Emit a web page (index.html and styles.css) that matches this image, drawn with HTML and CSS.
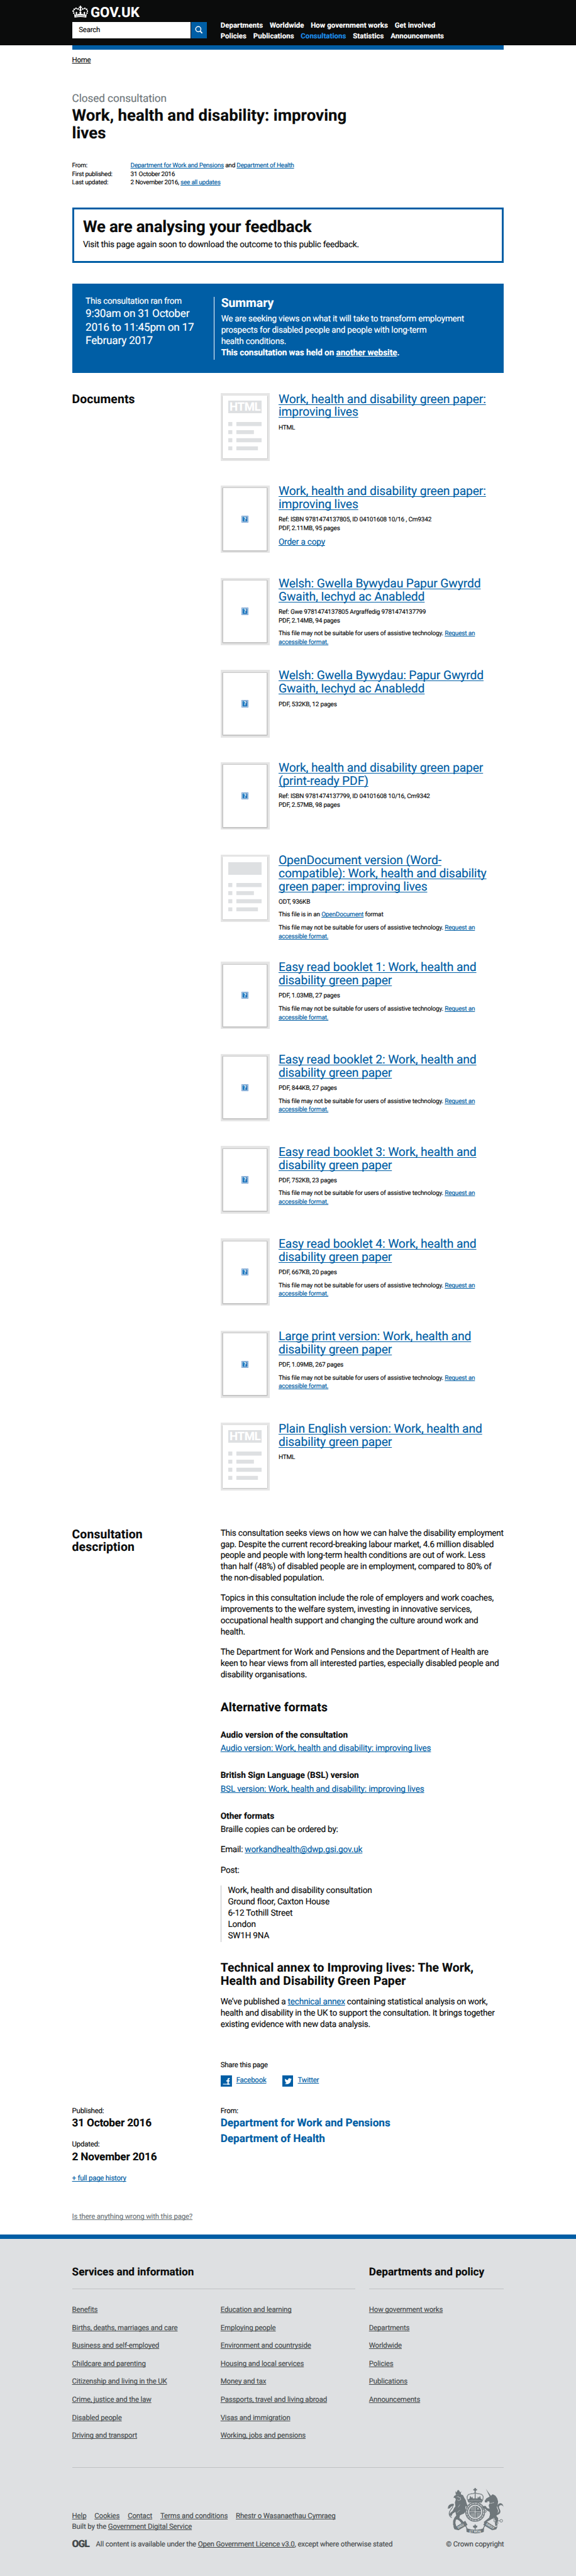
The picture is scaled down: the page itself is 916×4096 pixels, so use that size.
FILE: index.html
```html
<!DOCTYPE html>
<html lang="en">
<head>
<meta charset="utf-8">
<title>Work, health and disability: improving lives - GOV.UK</title>
<link rel="stylesheet" href="styles.css">
</head>
<body>
<svg class="defs" aria-hidden="true">
  <symbol id="page-rows" viewBox="0 0 75 63">
    <path fill="#dee0e2" d="M0 0h9v9H0zM18 0h57v9H18zM0 18h9v9H0zM18 18h39v9H18zM0 36h9v9H0zM18 36h57v9H18zM0 54h9v9H0zM18 54h48v9H18z"/>
  </symbol>
</svg>

<header class="header">
  <div class="wrap">
    <a class="logo" href="#">
      <svg class="crown" viewBox="0 0 36 27" fill="#fff">
        <path d="M16.800 0h2.400v2.600h2.400v2.300h-2.400v2.200l1.600 3.400-2.800 2-2.800-2 1.600-3.400V4.900h-2.400V2.600h2.400z"/>
        <circle cx="12.800" cy="7.400" r="1.900"/><circle cx="8.300" cy="6" r="1.900"/><circle cx="4.300" cy="8.200" r="1.900"/><circle cx="2" cy="12.200" r="1.900"/><circle cx="3.200" cy="16.400" r="1.700"/>
        <circle cx="23.200" cy="7.400" r="1.900"/><circle cx="27.700" cy="6" r="1.900"/><circle cx="31.700" cy="8.200" r="1.900"/><circle cx="34" cy="12.200" r="1.900"/><circle cx="32.800" cy="16.400" r="1.700"/>
        <path d="M5 26.500 4 18l4 2.500-.6-5.500 1.800-1.800 1.700 1.900-.5 4.400 2.500-.8 1.600-1.300 2.200 1.300-1-4.200L18 12.500l2.300 2-1 4.200 2.200-1.300 1.600 1.300 2.500.8-.5-4.400 1.700-1.900 1.800 1.800-.6 5.500 4-2.500-1 8.500q-13-2.600-26 0z"/>
        <path d="M7.500 23.300q10.500-2.200 21 0" fill="none" stroke="#0b0c0c" stroke-width="1"/>
      </svg>
      <span class="logo-text">GOV.UK</span>
    </a>
    <div class="header-row">
      <form class="search">
        <span class="search-field">Search</span>
        <span class="search-button">
          <svg viewBox="0 0 18 18"><circle cx="7.500" cy="7.500" r="5.800" fill="none" stroke="#fff" stroke-width="2"/><path d="m11.800 12 4.400 4.600" stroke="#fff" stroke-width="2.600"/></svg>
        </span>
      </form>
      <nav class="nav">
        <div class="nav-line"><a href="#">Departments</a><a href="#">Worldwide</a><a href="#">How government works</a><a href="#">Get involved</a></div>
        <div class="nav-line"><a href="#">Policies</a><a href="#">Publications</a><a class="active" href="#">Consultations</a><a href="#">Statistics</a><a href="#">Announcements</a></div>
      </nav>
    </div>
  </div>
</header>

<main class="wrap">
  <div class="bar"></div>
  <p class="crumb"><a href="#">Home</a></p>

  <p class="context">Closed consultation</p>
  <h1 class="title">Work, health and disability: improving<br>lives</h1>

  <dl class="meta">
    <dt>From:</dt><dd><a href="#">Department for Work and Pensions</a> and <a href="#">Department of Health</a></dd>
    <dt>First published:</dt><dd>31 October 2016</dd>
    <dt>Last updated:</dt><dd>2 November 2016, <a href="#">see all updates</a></dd>
  </dl>

  <section class="notice">
    <h2>We are analysing your feedback</h2>
    <p>Visit this page again soon to download the outcome to this public feedback.</p>
  </section>

  <section class="summary">
    <div class="dates">
      <p>This consultation ran from</p>
      <p class="dates-range">9:30am on 31 October<br>2016 to 11:45pm on 17<br>February 2017</p>
    </div>
    <div class="summary-body">
      <h2>Summary</h2>
      <p>We are seeking views on what it will take to transform employment<br>prospects for disabled people and people with long-term<br>health conditions.</p>
      <p><strong>This consultation was held on <a href="#">another website</a>.</strong></p>
    </div>
  </section>

  <section class="row documents">
    <h2 class="side">Documents</h2>
    <div class="doc-list">
      <article class="doc">
        <div class="thumb"><div class="page sheet"><span class="label">HTML</span><svg class="rows"><use href="#page-rows"/></svg></div></div>
        <div class="details">
          <h3><a href="#">Work, health and disability green paper:<br>improving lives</a></h3>
          <p>HTML</p>
        </div>
      </article>
      <article class="doc">
        <div class="thumb"><div class="page framed"><span class="missing">?</span></div></div>
        <div class="details">
          <h3><a href="#">Work, health and disability green paper:<br>improving lives</a></h3>
          <p>Ref: ISBN 9781474137805, ID 04101608 10/16 , Cm9342<br>PDF, 2.11MB, 95 pages</p>
          <p class="order"><a href="#">Order a copy</a></p>
        </div>
      </article>
      <article class="doc">
        <div class="thumb"><div class="page framed"><span class="missing">?</span></div></div>
        <div class="details">
          <h3><a href="#">Welsh: Gwella Bywydau Papur Gwyrdd<br>Gwaith, Iechyd ac Anabledd</a></h3>
          <p>Ref: Gwe 9781474137805 Argraffedig 9781474137799<br>PDF, 2.14MB, 94 pages</p>
          <p>This file may not be suitable for users of assistive technology. <a href="#">Request an<br>accessible format.</a></p>
        </div>
      </article>
      <article class="doc">
        <div class="thumb"><div class="page framed"><span class="missing">?</span></div></div>
        <div class="details">
          <h3><a href="#">Welsh: Gwella Bywydau: Papur Gwyrdd<br>Gwaith, Iechyd ac Anabledd</a></h3>
          <p>PDF, 532KB, 12 pages</p>
        </div>
      </article>
      <article class="doc">
        <div class="thumb"><div class="page framed"><span class="missing">?</span></div></div>
        <div class="details">
          <h3><a href="#">Work, health and disability green paper<br>(print-ready PDF)</a></h3>
          <p>Ref: ISBN 9781474137799, ID 04101608 10/16, Cm9342<br>PDF, 2.57MB, 98 pages</p>
        </div>
      </article>
      <article class="doc">
        <div class="thumb"><div class="page sheet"><span class="label"></span><svg class="rows"><use href="#page-rows"/></svg></div></div>
        <div class="details">
          <h3><a href="#">OpenDocument version (Word-<br>compatible): Work, health and disability<br>green paper: improving lives</a></h3>
          <p>ODT, 936KB</p>
          <p>This file is in an <a href="#">OpenDocument</a> format</p>
          <p>This file may not be suitable for users of assistive technology. <a href="#">Request an<br>accessible format.</a></p>
        </div>
      </article>
      <article class="doc">
        <div class="thumb"><div class="page framed"><span class="missing">?</span></div></div>
        <div class="details">
          <h3><a href="#">Easy read booklet 1: Work, health and<br>disability green paper</a></h3>
          <p>PDF, 1.03MB, 27 pages</p>
          <p>This file may not be suitable for users of assistive technology. <a href="#">Request an<br>accessible format.</a></p>
        </div>
      </article>
      <article class="doc">
        <div class="thumb"><div class="page framed"><span class="missing">?</span></div></div>
        <div class="details">
          <h3><a href="#">Easy read booklet 2: Work, health and<br>disability green paper</a></h3>
          <p>PDF, 844KB, 27 pages</p>
          <p>This file may not be suitable for users of assistive technology. <a href="#">Request an<br>accessible format.</a></p>
        </div>
      </article>
      <article class="doc">
        <div class="thumb"><div class="page framed"><span class="missing">?</span></div></div>
        <div class="details">
          <h3><a href="#">Easy read booklet 3: Work, health and<br>disability green paper</a></h3>
          <p>PDF, 752KB, 23 pages</p>
          <p>This file may not be suitable for users of assistive technology. <a href="#">Request an<br>accessible format.</a></p>
        </div>
      </article>
      <article class="doc">
        <div class="thumb"><div class="page framed"><span class="missing">?</span></div></div>
        <div class="details">
          <h3><a href="#">Easy read booklet 4: Work, health and<br>disability green paper</a></h3>
          <p>PDF, 667KB, 20 pages</p>
          <p>This file may not be suitable for users of assistive technology. <a href="#">Request an<br>accessible format.</a></p>
        </div>
      </article>
      <article class="doc">
        <div class="thumb"><div class="page framed"><span class="missing">?</span></div></div>
        <div class="details">
          <h3><a href="#">Large print version: Work, health and<br>disability green paper</a></h3>
          <p>PDF, 1.09MB, 267 pages</p>
          <p>This file may not be suitable for users of assistive technology. <a href="#">Request an<br>accessible format.</a></p>
        </div>
      </article>
      <article class="doc">
        <div class="thumb"><div class="page sheet"><span class="label">HTML</span><svg class="rows"><use href="#page-rows"/></svg></div></div>
        <div class="details">
          <h3><a href="#">Plain English version: Work, health and<br>disability green paper</a></h3>
          <p>HTML</p>
        </div>
      </article>
    </div>
  </section>

  <section class="row description">
    <h2 class="side">Consultation<br>description</h2>
    <div class="prose">
      <p>This consultation seeks views on how we can halve the disability employment<br>gap. Despite the current record-breaking labour market, 4.6 million disabled<br>people and people with long-term health conditions are out of work. Less<br>than half (48%) of disabled people are in employment, compared to 80% of<br>the non-disabled population.</p>
      <p>Topics in this consultation include the role of employers and work coaches,<br>improvements to the welfare system, investing in innovative services,<br>occupational health support and changing the culture around work and<br>health.</p>
      <p>The Department for Work and Pensions and the Department of Health are<br>keen to hear views from all interested parties, especially disabled people and<br>disability organisations.</p>
      <h2>Alternative formats</h2>
      <h3>Audio version of the consultation</h3>
      <p><a class="wide" href="#">Audio version: Work, health and disability: improving lives</a></p>
      <h3>British Sign Language (BSL) version</h3>
      <p><a class="wide" href="#">BSL version: Work, health and disability: improving lives</a></p>
      <h3>Other formats</h3>
      <p>Braille copies can be ordered by:</p>
      <p>Email: <a class="wide" href="#">workandhealth@dwp.gsi.gov.uk</a></p>
      <p>Post:</p>
      <address>Work, health and disability consultation<br>Ground floor, Caxton House<br>6-12 Tothill Street<br>London<br>SW1H 9NA</address>
      <h2 class="annex">Technical annex to Improving lives: The Work,<br>Health and Disability Green Paper</h2>
      <p>We’ve published a <a href="#">technical annex</a> containing statistical analysis on work,<br>health and disability in the UK to support the consultation. It brings together<br>existing evidence with new data analysis.</p>
    </div>
  </section>

  <section class="share">
    <p>Share this page</p>
    <div class="share-links">
      <a href="#"><svg viewBox="0 0 25 25"><rect width="25" height="25" fill="#005ea5"/><path d="M5 18h16v3H5z" fill="#8fb9dc"/><path d="M15 21v-7.500h-2.500v-2.800H15V9q0-3.200 3.300-3.200H20v2.600h-1.300q-.9 0-.9 1v1.300H20l-.4 2.800h-1.800V21z" fill="#fff"/></svg><span>Facebook</span></a>
      <a href="#"><svg viewBox="0 0 25 25"><rect width="25" height="25" fill="#005ea5"/><path d="M21 8.100q-.9.400-1.900.5 1-.6 1.400-1.800-.9.600-2 .8a3.300 3.300 0 0 0-5.700 3Q8.700 10.400 6 7.200q-1.300 2.600 1 4.400-.8 0-1.500-.4 0 2.400 2.600 3.300-.7.200-1.400 0 .6 2 3 2.300-2 1.600-4.800 1.400Q7 19.600 10 19.600q8.700-.3 9.400-9.700Q20.400 9.200 21 8.100z" fill="#fff"/></svg><span>Twitter</span></a>
    </div>
  </section>

  <section class="row history">
    <div class="history-dates">
      <p>Published:</p>
      <p class="strong">31 October 2016</p>
      <p class="updated">Updated:</p>
      <p class="strong">2 November 2016</p>
      <p class="full"><a href="#">+ full page history</a></p>
    </div>
    <div class="history-from">
      <p>From:</p>
      <p class="strong"><a href="#">Department for Work and Pensions</a></p>
      <p class="strong"><a href="#">Department of Health</a></p>
    </div>
  </section>

  <p class="report"><a href="#">Is there anything wrong with this page?</a></p>
</main>

<footer class="footer">
  <div class="wrap">
    <div class="categories">
      <section class="services">
        <h2>Services and information</h2>
        <div class="columns">
          <ul>
            <li><a href="#">Benefits</a></li>
            <li><a href="#">Births, deaths, marriages and care</a></li>
            <li><a href="#">Business and self-employed</a></li>
            <li><a href="#">Childcare and parenting</a></li>
            <li><a href="#">Citizenship and living in the UK</a></li>
            <li><a href="#">Crime, justice and the law</a></li>
            <li><a href="#">Disabled people</a></li>
            <li><a href="#">Driving and transport</a></li>
          </ul>
          <ul>
            <li><a href="#">Education and learning</a></li>
            <li><a href="#">Employing people</a></li>
            <li><a href="#">Environment and countryside</a></li>
            <li><a href="#">Housing and local services</a></li>
            <li><a href="#">Money and tax</a></li>
            <li><a href="#">Passports, travel and living abroad</a></li>
            <li><a href="#">Visas and immigration</a></li>
            <li><a href="#">Working, jobs and pensions</a></li>
          </ul>
        </div>
      </section>
      <section class="departments">
        <h2>Departments and policy</h2>
        <ul>
          <li><a href="#">How government works</a></li>
          <li><a href="#">Departments</a></li>
          <li><a href="#">Worldwide</a></li>
          <li><a href="#">Policies</a></li>
          <li><a href="#">Publications</a></li>
          <li><a href="#">Announcements</a></li>
        </ul>
      </section>
    </div>
    <div class="base">
      <div class="base-links">
        <p class="support"><a href="#">Help</a><a href="#">Cookies</a><a href="#">Contact</a><a href="#">Terms and conditions</a><a href="#">Rhestr o Wasanaethau Cymraeg</a></p>
        <p>Built by the <a href="#">Government Digital Service</a></p>
        <p class="licence"><span class="ogl">OGL</span><span>All content is available under the <a href="#">Open Government Licence v3.0</a>, except where otherwise stated</span></p>
      </div>
      <div class="copyright">
        <svg class="crest" viewBox="0 0 125 102" fill="#6f777b">
          <!-- crown -->
          <path d="M59.500 0h3v2.500h2.500v3h-2.500V9h-3V5.500H57v-3h2.500z"/>
          <path d="M46 30c-4-7-4-14 2-16 5-2 9 0 13-4 4 4 8 2 13 4 6 2 6 9 2 16z" fill="none" stroke="#6f777b" stroke-width="2" stroke-dasharray="2.600 .6"/>
          <path d="M60 10h2v15h-2zM50 17l3 5 2-3 1 6h-8zM72 17l-3 5-2-3-1 6h8z"/>
          <path d="M45 25q16-4 32 0l-1.500 8q-14.500-3-29 0z"/>
          <path d="M48 29q13-2.500 26 0" stroke="#dee0e2" fill="none" stroke-dasharray="2 1.500"/>
          <!-- garter and shield -->
          <circle cx="61" cy="53" r="19" fill="none" stroke="#6f777b" stroke-width="6.500"/>
          <circle cx="61" cy="53" r="19" fill="none" stroke="#dee0e2" stroke-width="3" stroke-dasharray="1 1.700 2 1.500"/>
          <circle cx="61" cy="53" r="13.500"/>
          <path d="M61 40v26M48 53h26" stroke="#dee0e2" stroke-width="1.300"/>
          <path d="M51 46h8M51 49h8M52 43h7M64 60h8M64 63h6M64 57h8M64 43l6 6M70 43l-5 6M52 56v7M55 56v9M58 56v9" stroke="#dee0e2" fill="none"/>
          <!-- lion -->
          <path d="m17 7 2 3 2-3 1-2h3l1 2 2 3 2-3-1 8H18z"/>
          <path d="M19 15l10-1 5 2 3 6 3 5 2 7 2 5-1 4-3-3-1 6 1 6-4 5-5 2-4 2-1 6 4 3 5 5 2 5-6-1-5-6-5-3-3 1-1 7 2 7 4 3-3 1-5-1-3-6 0-9 3-7 4-5-2-8-6 4-3 6-4-3 1-4 6-5 3-6 3-4-1-9 2-7-2-3-3 0 1-4z"/>
          <path d="M20 20l4-1 1 3 3-1 1 5-5 2-3-2M21 55l6-6M27 37l-4 6" stroke="#dee0e2" fill="none" stroke-width=".8"/>
          <path d="M9 66C1 62 2 54 7 48s6-8 1-9" fill="none" stroke="#6f777b" stroke-width="1.600"/>
          <path d="M0 46q0-11 13-11l1 4q-7 1-9 6z"/>
          <!-- unicorn -->
          <path d="M85 2l12 17-3 2z"/>
          <path d="M95 18l5-4 6 3 4 6 2 7-1 8-2 5 3 7-1 8-3 4 4 5 0 6-3 6 2 4-5 2-1-6 1-7-3-6-8 5-8 4-4 5-3-4 6-5 6-5 2-7-1-6-6-3-6-6-4 1 1-4 6-1 4 5 5 1-2-7 2-5-1-5-5 3-4 0-1-3 4-6z"/>
          <path d="M88 30l4 4 6 0 5-2" stroke="#dee0e2" stroke-width="1.500" fill="none" stroke-dasharray="1.500 1"/>
          <path d="M108 61q13-4 8-13t2-10q5 0 6 5-1-10-8-9-9 4-4 12t-5 12z"/>
          <g fill="none" stroke="#6f777b" stroke-width="1.300"><circle cx="81" cy="43" r="2.200"/><circle cx="84" cy="52" r="2"/><circle cx="105" cy="73" r="2.500"/><circle cx="110" cy="78" r="2"/><circle cx="102" cy="67" r="2"/><circle cx="119" cy="73" r="3"/><path d="M108 73h8"/></g>
          <!-- motto scroll -->
          <path d="M12 85l5 2 22-14 5 9-20 12-9-2z"/><path d="M111 85l-5 2-22-14-5 9 20 12 9-2z"/>
          <path d="M40 82q-3 2 1 6l1 10q19 6 38 0l1-10q4-4 1-6l-4 8q-17 6-34 0z"/>
          <path d="M61 80l2 4 3 0-1 4-3 1v4h-2v-4l-3-1-1-4 3 0z"/>
          <text x="61" y="99.500" text-anchor="middle" class="motto">ET MON</text>
          <text x="30" y="87" text-anchor="middle" class="motto" transform="rotate(-31 30 87)">DIEU</text>
          <text x="93" y="87" text-anchor="middle" class="motto" transform="rotate(32 93 87)">DROIT</text>
        </svg>
        <p>© Crown copyright</p>
      </div>
    </div>
  </div>
</footer>
</body>
</html>
```
FILE: styles.css
```css
html { font-size: 7.1546px; }
* { box-sizing: border-box; }
body {
  margin: 0;
  background: #fff;
  color: #0b0c0c;
  font: 400 1.9rem/2.5rem Roboto, "Liberation Sans", sans-serif;
  letter-spacing: -.017em;
  white-space: nowrap;
  text-rendering: geometricPrecision;
  -webkit-text-stroke: .16px;
}
h1, h2, h3, p, ul, dl, dd, address { margin: 0; padding: 0; font-style: normal; }
h1, h2, h3, strong { letter-spacing: .001em; font-weight: 700; }
ul { list-style: none; }
a { color: #005ea5; text-decoration: underline; text-decoration-skip-ink: none; text-decoration-thickness: 1px; text-underline-offset: .08em; }
svg { display: block; }
.defs { position: absolute; width: 0; height: 0; }
.wrap { width: 96rem; margin: 0 auto; }

/* header */
.header { height: 10.1rem; background: #0b0c0c; }
.logo { display: flex; height: 4.9rem; padding-top: 1.1rem; color: #fff; text-decoration: none; }
.crown { width: 3.6rem; height: 2.7rem; margin: .1rem .5rem 0 0; }
.logo-text { font-weight: 700; font-size: 3.1rem; line-height: 3.4rem; letter-spacing: .005em; }
.header-row { display: flex; }
.search { display: flex; width: 30rem; height: 3.6rem; margin-right: 3rem; gap: .1rem; }
.search-field { flex: 1; padding-left: 1.5rem; background: #fff; font-size: 1.6rem; line-height: 3.6rem; }
.search-button { display: flex; width: 3.5rem; background: #005ea5; align-items: center; justify-content: center; }
.search-button svg { width: 1.8rem; height: 1.8rem; }
.nav { margin-top: -.45rem; font-weight: 700; font-size: 1.6rem; line-height: 2.4rem; letter-spacing: .006em; }
.nav-line { display: flex; gap: 1.5rem; }
.nav a { color: #fff; text-decoration: none; }
.nav .active { color: #1d8feb; }

/* page heading */
.bar { height: 1rem; background: #005ea5; }
.crumb { margin-top: 1.15rem; font-size: 1.6rem; line-height: 2rem; }
.crumb a { color: #0b0c0c; }
.context { margin-top: 6.25rem; color: #6f777b; font-size: 2.4rem; line-height: 3rem; letter-spacing: -.004em; }
.title { padding-top: .2rem; font-size: 3.6rem; line-height: 3.95rem; letter-spacing: .002em; }
.meta { display: grid; grid-template-columns: 13rem 1fr; margin-top: 4.35rem; font-size: 1.4rem; line-height: 1.9rem; }

.notice { height: 12.4rem; margin-top: 4.45rem; padding: 1.95rem 2rem 0; border: .5rem solid #005ea5; }
.notice h2 { margin-bottom: .85rem; font-size: 3.6rem; line-height: 4rem; letter-spacing: -.005em; }

.summary { display: flex; height: 19.9rem; margin-top: 4.5rem; padding: 3rem 0 3rem 3rem; background: #005ea5; color: #fff; }
.summary a { color: #fff; }
.dates { width: 28.5rem; margin-top: -.1rem; }
.dates-range { font-size: 2.4rem; line-height: 3rem; letter-spacing: -.012em; }
.summary-body { padding-left: 1.5rem; border-left: 1px solid #fff; }
.summary-body h2 { margin: -.15rem 0 .95rem; font-size: 2.7rem; line-height: 3rem; }
.summary-body strong { letter-spacing: -.005em; }

/* two-column rows */
.row { display: grid; grid-template-columns: 33rem 63rem; }
.side { font-size: 2.7rem; line-height: 2.9rem; letter-spacing: .008em; }

/* documents */
.documents { margin-top: 4.5rem; }
.documents .side { margin-top: -.1rem; }
.doc-list { display: grid; row-gap: 5.5rem; }
.doc { display: flex; align-items: flex-start; }
.thumb { width: 10.9rem; height: 15rem; padding: .5rem; margin-right: 2rem; background: #e6e6e6; }
.page { width: 9.9rem; height: 14rem; background: #fff; box-shadow: 0 .2rem .2rem rgba(0, 0, 0, .4), 0 0 .1rem rgba(0, 0, 0, .3); }
.sheet { padding: 1.2rem; }
.label { display: block; height: 2.8rem; margin-bottom: 1.9rem; background: #dee0e2; color: #fff; font-weight: 700; font-size: 2.6rem; line-height: 2.8rem; letter-spacing: -.02em; text-align: center; }
.rows { width: 7.5rem; height: 6.3rem; }
.framed { display: flex; border: 1px solid #c9c9c9; align-items: center; justify-content: center; }
.missing { width: 1.6rem; height: 1.6rem; border: 1px solid #7fa6d4; background: #2277bd; box-shadow: inset 0 0 0 .5px #fff; color: #fff; font: 700 1.2rem/1.3rem "Liberation Serif", serif; letter-spacing: 0; text-align: center; }
.details { margin: -.1rem 0 -.9rem; }
.details h3 { margin-bottom: 1rem; font-weight: 400; font-size: 2.7rem; line-height: 2.93rem; letter-spacing: -.007em; }
.details p { font-size: 1.4rem; line-height: 1.9rem; letter-spacing: -.018em; }
.details p + p { margin-top: .97rem; }
.details .order { font-size: 1.9rem; line-height: 2.5rem; letter-spacing: -.014em; }

/* description */
.description { margin-top: 8.4rem; }
.prose p + p { margin-top: 2rem; }
.prose h2 { margin-top: 4.4rem; font-size: 2.7rem; line-height: 3rem; letter-spacing: .006em; }
.prose h3 { margin: 3.5rem 0 .5rem; font-size: 1.9rem; line-height: 2.5rem; }
.prose .wide { letter-spacing: -.011em; }
.prose address { margin-top: 2.1rem; padding-left: 1.5rem; border-left: 1px solid #bfc1c3; letter-spacing: -.012em; }
.prose .annex { margin: 4.4rem 0 1.9rem; line-height: 2.93rem; }

.share { margin: 6.6rem 0 0 33rem; font-size: 1.6rem; line-height: 2rem; }
.share-links { display: flex; gap: 3.5rem; margin-top: 1.35rem; }
.share-links a { display: flex; gap: 1rem; text-decoration: none; }
.share-links svg { width: 2.5rem; height: 2.5rem; }
.share-links span { text-decoration: underline; text-decoration-skip-ink: none; text-underline-offset: .08em; }

.history { margin-top: 4.35rem; font-size: 1.6rem; line-height: 2rem; }
.history .strong { margin-top: .45rem; font-weight: 700; font-size: 2.4rem; line-height: 3rem; letter-spacing: -.01em; }
.history .strong a { text-decoration: none; }
.history-from .strong { letter-spacing: 0; }
.history-from .strong + .strong { margin-top: .5rem; }
.history .updated { margin-top: 2.05rem; }
.history .full { margin-top: 2.05rem; }
.report { margin: 6.5rem 0 3.1rem; font-size: 1.6rem; line-height: 2rem; letter-spacing: -.014em; }
.report a { color: #6f777b; }

/* footer */
.footer { height: 75.8rem; border-top: 1rem solid #005ea5; background: #dee0e2; color: #454a4c; font-size: 1.6rem; line-height: 2rem; letter-spacing: -.013em; }
.footer a { color: #454a4c; }
.categories { display: grid; grid-template-columns: 63rem 30rem; gap: 3rem; padding: 5.95rem 0 6.1rem; border-bottom: 1px solid #bfc1c3; }
.categories h2 { margin-bottom: 3.45rem; padding-bottom: 2.1rem; border-bottom: 1px solid #bfc1c3; color: #0b0c0c; font-size: 2.4rem; line-height: 3rem; }
.columns { display: grid; grid-template-columns: 33rem 30rem; }
.categories ul { display: grid; row-gap: 2rem; }
.base { display: flex; justify-content: space-between; line-height: 2.4rem; }
.base-links { padding-top: 9.4rem; }
.support { display: flex; gap: 1.8rem; }
.licence { display: flex; margin-top: 1.6rem; }
.ogl { width: 5.3rem; font-weight: 900; font-size: 2.2rem; line-height: 2.1rem; letter-spacing: -.06em; }
.copyright { padding-top: 4.5rem; }
.copyright p { margin-top: 1rem; text-align: right; }
.crest { width: 12.5rem; height: 10.2rem; margin-left: auto; }
.motto { font: 700 7px Roboto, sans-serif; fill: #dee0e2; letter-spacing: 0; }
```
